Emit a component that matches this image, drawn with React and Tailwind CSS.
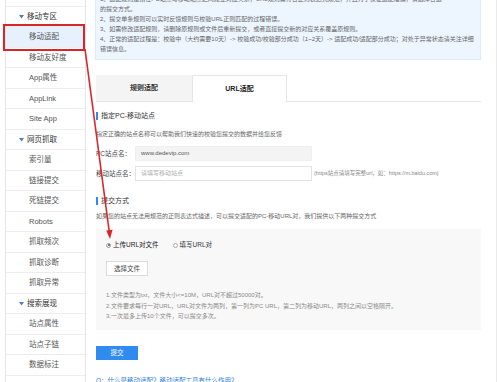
import React from "react";

const Tri = () => (
  <svg width="5" height="4" viewBox="0 0 5 4" className="mr-[3px] shrink-0">
    <polygon points="0,0 5,0 2.5,3.5" fill="#4a7fc1" />
  </svg>
);

function Sidebar() {
  const rows = [
    { t: "移动专区", h: true },
    { t: "移动适配", a: true },
    { t: "移动友好度" },
    { t: "App属性" },
    { t: "AppLink" },
    { t: "Site App" },
    { t: "网页抓取", h: true },
    { t: "索引量" },
    { t: "链接提交" },
    { t: "死链提交" },
    { t: "Robots" },
    { t: "抓取频次" },
    { t: "抓取诊断" },
    { t: "抓取异常" },
    { t: "搜索展现", h: true },
    { t: "站点属性" },
    { t: "站点子链" },
    { t: "数据标注" },
    { t: "" },
  ];
  return (
    <div className="w-[81px] shrink-0 border-x border-[#e6e6e6] bg-white">
      <div className="h-[6.75px] border-b border-[#ededed]" />
      {rows.map((r, i) => (
        <div
          key={i}
          className={
            "h-[20.5px] border-b border-[#ededed] flex items-center text-[7.5px] leading-none whitespace-nowrap " +
            (r.h ? "pl-[13px] text-[#333]" : "pl-[23px] text-[#555]") +
            (r.a ? " bg-[#e6f1fd] text-[#2f7fe0]" : "")
          }
        >
          {r.h && <Tri />}
          {r.t}
        </div>
      ))}
    </div>
  );
}

const Heading = ({ children }) => (
  <div className="flex items-center h-[10px]">
    <div className="w-[2px] h-[8px] bg-[#3385ff] mr-[3px]" />
    <span className="text-[7px] leading-[10px] text-[#333]">{children}</span>
  </div>
);

function Main() {
  return (
    <div className="w-[411px] shrink-0 border-r border-[#ececec] pl-[10px] pr-[15px] bg-white">
      <div className="-mt-[10px] -ml-[1px] pt-[3px] pb-[5px] pl-[4px] bg-[#edf5fe] border border-[#dbe9f8] text-[6px] leading-[10px] text-[#666] whitespace-nowrap overflow-hidden">
        <div>1、适配规则是指在PC站点与移动站点之间建立对应关系，URL规则需符合正则表达式规范，并且为了保证适配准确，请选择合适</div>
        <div>的提交方式。</div>
        <div>2、提交单条规则可以实时反馈规则与校验URL正则匹配的过程错误。</div>
        <div>3、如需修改适配规则，请删除原规则或文件后重新提交，或者直接提交新的对应关系覆盖原规则。</div>
        <div>4、正常的适配过程是：校验中（大约需要10天）-&gt; 校验成功/校验部分成功（1~2天）-&gt; 适配成功/适配部分成功；对处于异常状态请关注详细</div>
        <div>错误信息。</div>
      </div>

      <div className="mt-[15px] flex h-[27px] border-b border-[#e6e6e6]">
        <div className="w-[96px] bg-[#f4f4f4] flex items-center justify-center text-[7px] font-bold text-[#333]">
          规则适配
        </div>
        <div className="w-[95px] bg-white border-x border-t border-[#e6e6e6] -mb-px flex items-center justify-center text-[7px] font-bold text-[#222]">
          URL适配
        </div>
      </div>

      <div className="mt-[9px]">
        <Heading>指定PC-移动站点</Heading>
      </div>
      <div className="mt-[8px] text-[6px] leading-[10px] text-[#666]">
        指定正确的站点名称可以帮助我们快速的校验您提交的数据并给您反馈
      </div>

      <div className="mt-[7px] flex items-center h-[15px]">
        <div className="w-[39px] text-[6.5px] text-[#444] whitespace-nowrap">PC站点名：</div>
        <div className="w-[177px] h-[15px] bg-[#f4f4f4] border border-[#efefef] flex items-center pl-[5px] text-[6px] text-[#555]">
          www.dedevip.com
        </div>
      </div>
      <div className="mt-[5px] flex items-center h-[15px]">
        <div className="w-[39px] text-[6.5px] text-[#444] whitespace-nowrap">移动站点名：</div>
        <div className="w-[177px] h-[15px] bg-white border border-[#e3e3e3] flex items-center pl-[5px] text-[6px] text-[#b0b0b0]">
          请填写移动站点
        </div>
        <div className="ml-[2px] text-[5.5px] text-[#888] whitespace-nowrap">
          (https站点请填写完整url，如：https://m.baidu.com)
        </div>
      </div>

      <div className="mt-[15px]">
        <Heading>提交方式</Heading>
      </div>
      <div className="mt-[5px] text-[6px] leading-[10px] text-[#666] whitespace-nowrap">
        如果您的站点无法用规范的正则表达式描述，可以提交适配的PC-移动URL对，我们提供以下两种提交方式
      </div>

      <div className="mt-[8px] h-[101px] bg-[#f8f8f8] pl-[10px] pt-[11px]">
        <div className="flex items-center h-[10px]">
          <div className="w-[5px] h-[5px] rounded-full border border-[#999] flex items-center justify-center bg-white">
            <div className="w-[2px] h-[2px] rounded-full bg-[#555]" />
          </div>
          <span className="ml-[2px] text-[6.5px] text-[#222]">上传URL对文件</span>
          <div className="ml-[14px] w-[5px] h-[5px] rounded-full border border-[#aaa] bg-white" />
          <span className="ml-[2px] text-[6.5px] text-[#333]">填写URL对</span>
        </div>
        <div className="mt-[11px] w-[42px] h-[15px] bg-white border border-[#dcdcdc] flex items-center justify-center text-[6.5px] text-[#444]">
          选择文件
        </div>
        <div className="mt-[14px] text-[6px] leading-[10.5px] text-[#8a8a8a] whitespace-nowrap">
          <div>1.文件类型为txt，文件大小&lt;=10M，URL对不超过50000对。</div>
          <div>2.文件要求每行一对URL，URL对文件为两列，第一列为PC URL，第二列为移动URL，两列之间以空格隔开。</div>
          <div>3.一次最多上传10个文件，可以提交多次。</div>
        </div>
      </div>

      <div className="mt-[16px] w-[42px] h-[14px] bg-[#2f8bef] flex items-center justify-center text-[6.5px] text-white">
        提交
      </div>
      <div className="mt-[16px] text-[6.5px] leading-[10px] text-[#2f7fe0] whitespace-nowrap">
        Q：什么是移动适配？移动适配工具有什么作用？
      </div>
    </div>
  );
}

export default function App() {
  return (
    <div className="relative w-[498px] h-[382px] overflow-hidden bg-white font-['Liberation_Sans','Noto_Sans_CJK_SC',sans-serif]">
      <div className="flex h-full">
        <div className="w-[5px] shrink-0" />
        <Sidebar />
        <Main />
      </div>
      <div className="absolute left-[3px] top-[24px] w-[82px] h-[27px] border-2 border-[#d9262b]" />
      <svg className="absolute inset-0 pointer-events-none" width="498" height="382">
        <line x1="85" y1="49" x2="109.3" y2="232" stroke="#d9262b" strokeWidth="1.6" />
        <polygon points="110,239 106.2,230.6 112.6,229.8" fill="#d9262b" />
      </svg>
    </div>
  );
}
